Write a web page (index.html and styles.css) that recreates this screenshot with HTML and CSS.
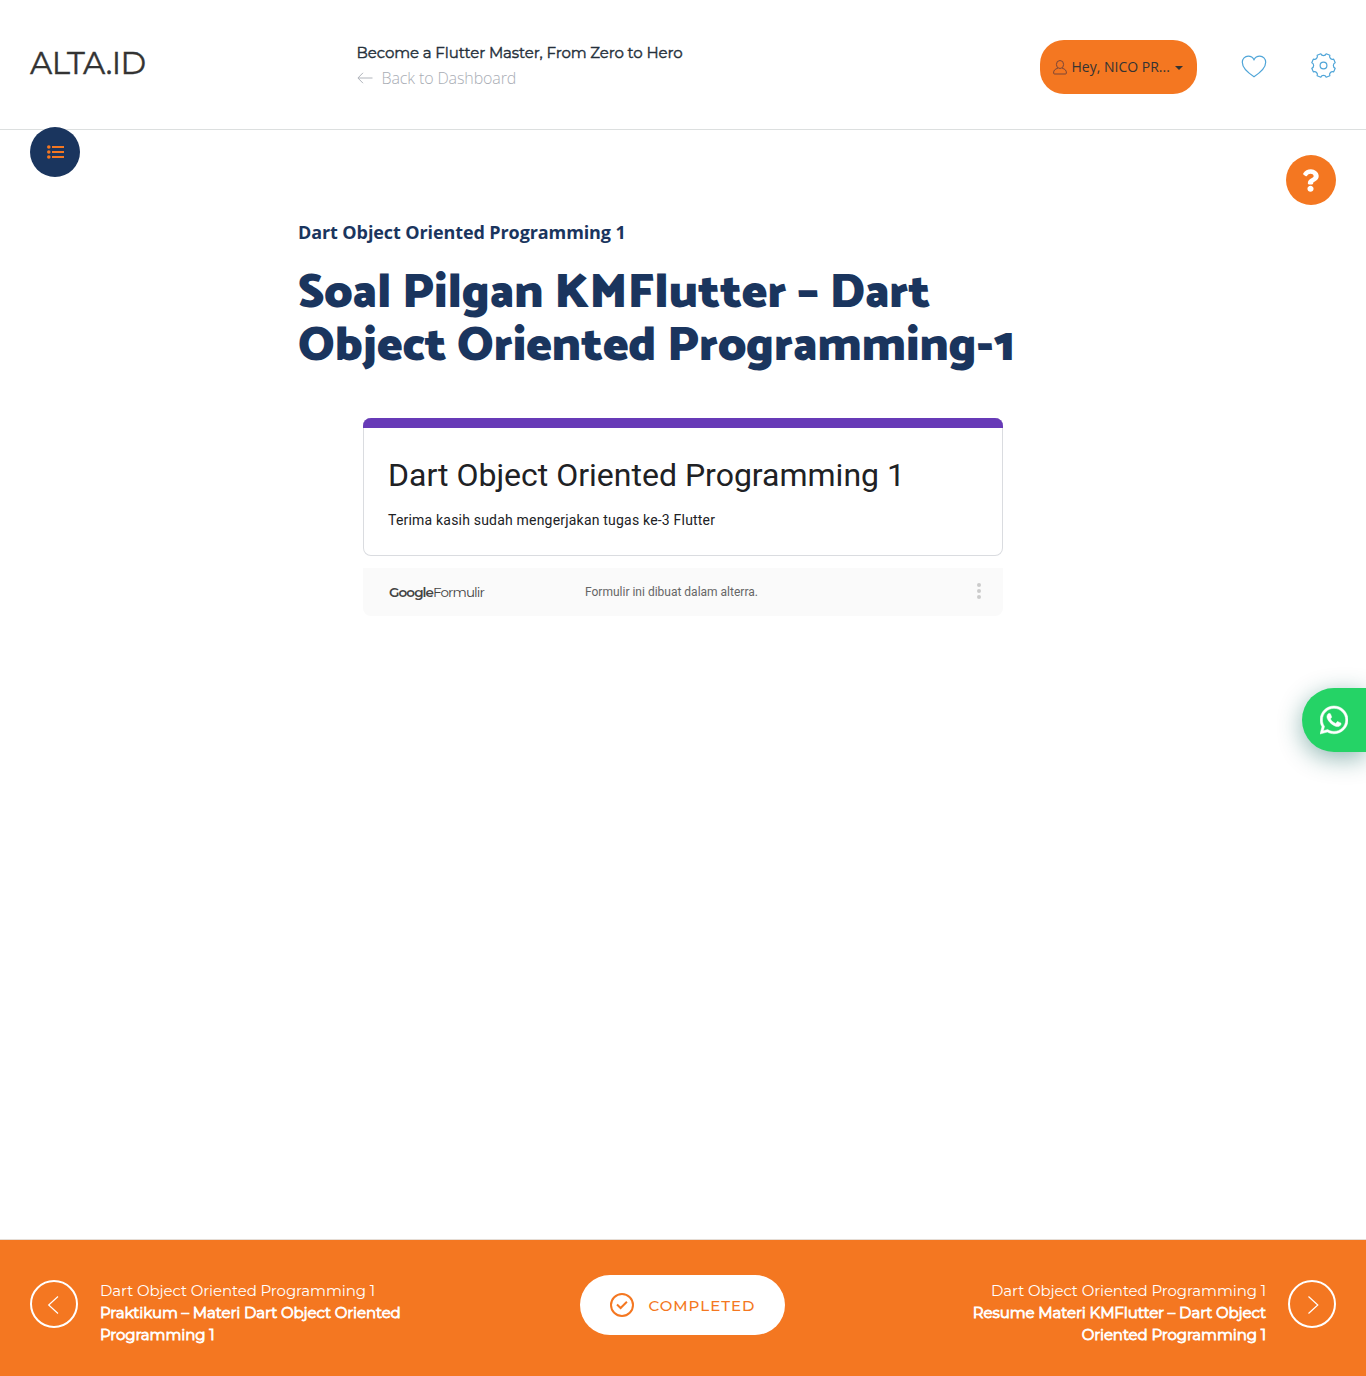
FILE: index.html
```html
<!DOCTYPE html>
<html lang="id">
<head>
<meta charset="utf-8">
<title>Soal Pilgan KMFlutter – Dart Object Oriented Programming-1</title>
<link rel="stylesheet" href="styles.css">
</head>
<body>
<header class="header">
  <a class="logo">ALTA.ID</a>
  <div class="course">
    <div class="course-title">Become a Flutter Master, From Zero to Hero</div>
    <a class="back">
      <svg width="16" height="12" viewBox="0 0 16 12"><path d="M6 .8.9 6 6 11.200M1 6h14.500" fill="none" stroke="#b0b4bb"/></svg>
      <span class="back-text">Back to Dashboard</span>
    </a>
  </div>
  <div class="actions">
    <a class="account">
      <svg width="14" height="15" viewBox="0 0 14 15" fill="none" stroke="#7a4638"><ellipse cx="7" cy="4.500" rx="3.600" ry="4"/><path d="M4.800 8.300C2 9 .6 10.200.6 13q0 1 1 1h10.800q1 0 1-1c0-2.800-1.400-4-4.200-4.700"/></svg>
      <span class="account-name">Hey, NICO PR...</span>
      <span class="caret"></span>
    </a>
    <svg class="heart" width="26" height="23" viewBox="0 0 26 23"><path d="M13 21.700C8.500 18.800 1.300 13.700 1.300 7.300 1.300 3.600 4 1.100 7.200 1.100 9.800 1.100 12 2.600 13 4.700 14 2.600 16.200 1.100 18.800 1.100 22 1.100 24.700 3.600 24.700 7.300 24.700 13.700 17.500 18.800 13 21.700Z" fill="none" stroke="#4fa5d8" stroke-width="1.200"/></svg>
    <svg class="gear" width="25" height="25" viewBox="0 0 25 25" fill="none" stroke="#4fa5d8" stroke-width="1.200" stroke-linejoin="round"><path d="M15.200.8 18.860 2.320A2.900 2.900 0 0 0 22.680 6.140L24.200 9.800A2.900 2.900 0 0 0 24.200 15.200L22.680 18.860A2.900 2.900 0 0 0 18.860 22.680L15.200 24.200A2.900 2.900 0 0 0 9.800 24.200L6.140 22.680A2.900 2.900 0 0 0 2.320 18.860L.8 15.200A2.900 2.900 0 0 0 .8 9.800L2.320 6.140A2.900 2.900 0 0 0 6.140 2.320L9.800.8A2.900 2.900 0 0 0 15.200.8Z"/><circle cx="12.500" cy="12.500" r="3.400"/></svg>
  </div>
</header>

<a class="round menu-button">
  <svg width="17" height="14" viewBox="0 0 17 14" fill="#f47721"><circle cx="1.800" cy="2" r="1.800"/><circle cx="1.800" cy="7" r="1.800"/><circle cx="1.800" cy="12" r="1.800"/><path d="M5 1h12v2H5zM5 6h12v2H5zM5 11h12v2H5z"/></svg>
</a>
<a class="round help-button">
  <svg width="17" height="23" viewBox="0 0 384 512" fill="#fff"><path d="M202.021 0C122.202 0 70.503 32.703 29.914 91.026c-7.363 10.580-5.093 25.086 5.178 32.874l43.138 32.709c10.373 7.865 25.132 6.026 33.253-4.148 25.049-31.381 43.630-49.449 82.757-49.449 30.764 0 68.816 19.799 68.816 49.631 0 22.552-18.617 34.134-48.993 51.164-35.423 19.860-82.299 44.576-82.299 106.405V320c0 13.255 10.745 24 24 24h72.471c13.255 0 24-10.745 24-24v-5.773c0-42.860 125.268-44.645 125.268-160.627C377.504 66.256 286.902 0 202.021 0zM192 373.459c-38.196 0-69.271 31.075-69.271 69.271 0 38.195 31.075 69.270 69.271 69.270s69.271-31.075 69.271-69.271-31.075-69.270-69.271-69.270z"/></svg>
</a>

<main class="lesson">
  <div class="section-name">Dart Object Oriented Programming 1</div>
  <h1 class="lesson-title">Soal Pilgan KMFlutter – Dart<br>Object Oriented Programming-1</h1>
  <section class="form-card">
    <h2 class="form-title">Dart Object Oriented Programming 1</h2>
    <p class="form-note">Terima kasih sudah mengerjakan tugas ke-3 Flutter</p>
  </section>
  <section class="form-footer">
    <div class="form-brand"><b class="brand-google">Google</b><span class="brand-forms">Formulir</span></div>
    <div class="form-origin">Formulir ini dibuat dalam alterra.</div>
    <svg class="more" width="6" height="18" viewBox="0 0 6 18" fill="#cbcbcb"><circle cx="3" cy="3" r="2"/><circle cx="3" cy="9" r="2"/><circle cx="3" cy="15" r="2"/></svg>
  </section>
</main>

<a class="whatsapp">
  <svg width="28" height="32" viewBox="0 0 448 512" fill="#fff" stroke="#fff" stroke-width="8"><path d="M380.900 97.100C339 55.100 283.200 32 223.900 32c-122.400 0-222 99.600-222 222 0 39.100 10.200 77.300 29.600 111L0 480l117.700-30.900c32.400 17.700 68.900 27 106.100 27h.1c122.300 0 224.100-99.600 224.100-222 0-59.300-25.200-115-67.100-157zm-157 341.600c-33.200 0-65.700-8.900-94-25.700l-6.700-4-69.800 18.300L72 359.200l-4.400-7c-18.500-29.400-28.200-63.300-28.200-98.200 0-101.700 82.800-184.500 184.600-184.500 49.300 0 95.600 19.200 130.400 54.100 34.800 34.900 56.200 81.200 56.100 130.500 0 101.800-84.900 184.600-186.600 184.600zm101.200-138.200c-5.500-2.800-32.800-16.200-37.900-18-5.100-1.900-8.800-2.800-12.500 2.800-3.700 5.600-14.300 18-17.600 21.800-3.200 3.700-6.500 4.200-12 1.400-32.600-16.300-54-29.100-75.500-66-5.700-9.800 5.700-9.100 16.300-30.300 1.800-3.700.9-6.900-.5-9.700-1.400-2.800-12.500-30.100-17.100-41.200-4.500-10.800-9.100-9.300-12.500-9.500-3.200-.2-6.900-.2-10.600-.2-3.700 0-9.700 1.400-14.800 6.900-5.100 5.600-19.400 19-19.400 46.300 0 27.300 19.900 53.700 22.600 57.400 2.800 3.700 39.100 59.700 94.800 83.800 35.200 15.200 49 16.500 66.600 13.900 10.700-1.600 32.800-13.400 37.400-26.400 4.600-13 4.600-24.100 3.200-26.400-1.300-2.500-5-3.900-10.500-6.600z"/></svg>
</a>

<footer class="footer">
  <a class="step step-prev">
    <svg width="48" height="48" viewBox="0 0 48 48" fill="none" stroke="#fff"><circle cx="24" cy="24" r="23" stroke-width="2"/><path d="M28 16.500 18.700 25 28 33.500" stroke-width="1.200"/></svg>
    <div class="step-text">Dart Object Oriented Programming 1<br><b>Praktikum – Materi Dart Object Oriented<br>Programming 1</b></div>
  </a>
  <a class="completed">
    <svg width="24" height="24" viewBox="0 0 24 24" fill="none" stroke="#f47721" stroke-width="2"><circle cx="12" cy="12" r="11"/><path d="m7 11.500 3.600 3.500 6.300-6.200"/></svg>
    <span class="completed-text">COMPLETED</span>
  </a>
  <a class="step step-next">
    <div class="step-text">Dart Object Oriented Programming 1<br><b>Resume Materi KMFlutter – Dart Object<br>Oriented Programming 1</b></div>
    <svg width="48" height="48" viewBox="0 0 48 48" fill="none" stroke="#fff"><circle cx="24" cy="24" r="23" stroke-width="2"/><path d="M20.500 16.500 29.800 25 20.500 33.500" stroke-width="1.200"/></svg>
  </a>
</footer>
</body>
</html>
```
FILE: styles.css
```css
* { box-sizing: border-box; }
body {
  margin: 0;
  min-height: 1376px;
  display: flex;
  flex-direction: column;
  position: relative;
  background: #fff;
  font-family: "Open Sans", sans-serif;
  white-space: nowrap;
}
svg { display: block; flex: none; }
h1, h2, p { margin: 0; }

.header {
  height: 130px;
  flex: none;
  display: flex;
  padding: 0 30px;
  border-bottom: 1px solid #dcdfdf;
}
.logo {
  width: 326.500px;
  padding-top: 43px;
  font: 400 31px/40px Montserrat, Inter, sans-serif;
  letter-spacing: -.6px;
  -webkit-text-stroke: .4px #333;
  color: #333;
}
.course { padding-top: 42px; }
.course-title {
  font: 400 15px/22px Montserrat, Inter, sans-serif;
  letter-spacing: -.1px;
  -webkit-text-stroke: .4px #25303b;
  color: #25303b;
}
.back {
  display: flex;
  align-items: center;
  gap: 9px;
  height: 28px;
  font-size: 16px;
  font-weight: 300;
  letter-spacing: -.12px;
  color: #a9adb5;
}
.actions {
  margin-left: auto;
  display: flex;
  align-items: flex-start;
}
.account {
  display: flex;
  align-items: center;
  width: 157px;
  height: 54px;
  margin: 40px 44px 0 0;
  padding: 0 0 0 13px;
  border-radius: 24px;
  background: #f47721;
  color: #333;
  font-size: 14px;
}
.account-name { margin: -2px 0 0 4.500px; }
.caret {
  margin: 2px 0 0 5px;
  border: 4px solid transparent;
  border-top-color: #333;
  border-bottom: 0;
}
.heart { margin: 55px 44px 0 0; }
.gear { margin-top: 53px; }

.round {
  position: absolute;
  display: flex;
  align-items: center;
  justify-content: center;
  width: 50px;
  height: 50px;
  border-radius: 50%;
}
.menu-button { left: 30px; top: 127px; background: #1a355e; }
.help-button { right: 30px; top: 155px; padding: 1px 1px 0 0; background: #f47721; }

.lesson {
  flex: 1;
  width: 770px;
  margin: 0 auto;
  padding-top: 90px;
  color: #1a355e;
}
.section-name { font-size: 18px; line-height: 25px; font-weight: 700; letter-spacing: -.1px; }
.lesson-title {
  margin-top: 22px;
  font: 900 48px/53px Catamaran, "Noto Sans", sans-serif;
}
.form-card {
  width: 640px;
  height: 138px;
  margin: 45px auto 0;
  padding: 35px 25px 0;
  border-radius: 8px;
  background: linear-gradient(#673ab7 10px, transparent 10px);
  box-shadow: inset 0 0 0 1px #dadce0;
  font-family: Roboto, sans-serif;
  color: #202124;
  position: relative;
}
.form-card::before {
  content: "";
  position: absolute;
  top: 0;
  left: 0;
  right: 0;
  height: 10px;
  border-radius: 8px 8px 0 0;
  background: #673ab7;
}
.form-title { font-size: 32px; line-height: 44px; font-weight: 400; }
.form-note { margin-top: 12px; font-size: 14px; line-height: 22px; letter-spacing: .2px; }
.form-footer {
  display: flex;
  align-items: center;
  width: 640px;
  height: 48px;
  margin: 12px auto 0;
  padding: 0 21px 0 26px;
  border-radius: 0 0 8px 8px;
  background: #fafafa;
  color: #444;
}
.form-brand { width: 196px; margin-top: -1px; font: 400 13.500px/20px "Product Sans", Montserrat, sans-serif; letter-spacing: -.9px; }
.form-brand b { font-weight: 600; }
.form-origin { flex: 1; font: 400 12px/18px Roboto, sans-serif; color: #666; }
.more { margin-top: -2px; }

.whatsapp {
  position: absolute;
  right: 0;
  top: 688px;
  width: 64px;
  height: 64px;
  display: flex;
  align-items: center;
  padding-left: 18px;
  border-radius: 32px 0 0 32px;
  background: #25d366;
  box-shadow: 0 6px 24px rgba(7, 94, 84, .45);
}

.footer {
  height: 137px;
  flex: none;
  display: grid;
  grid-template-columns: 550px 205px 1fr;
  align-items: start;
  padding: 0 30px;
  border-top: 1px solid #e5ddd6;
  background: #f47721;
  color: #fff;
}
.step { display: flex; gap: 22px; padding-top: 40px; }
.step-next { justify-content: flex-end; text-align: right; }
.step-text { font: 400 15px/22px Montserrat, Inter, sans-serif; letter-spacing: -.1px; }
.step-text b { font-weight: 400; -webkit-text-stroke: .8px #fff; }
.completed {
  display: flex;
  align-items: center;
  height: 60px;
  margin-top: 35px;
  padding-left: 30px;
  gap: 14.500px;
  border-radius: 30px;
  background: #fff;
  color: #f47721;
  font: 500 15px/20px Montserrat, Inter, sans-serif;
  letter-spacing: 1px;
}
.completed-text { padding-top: 2px; }
```
